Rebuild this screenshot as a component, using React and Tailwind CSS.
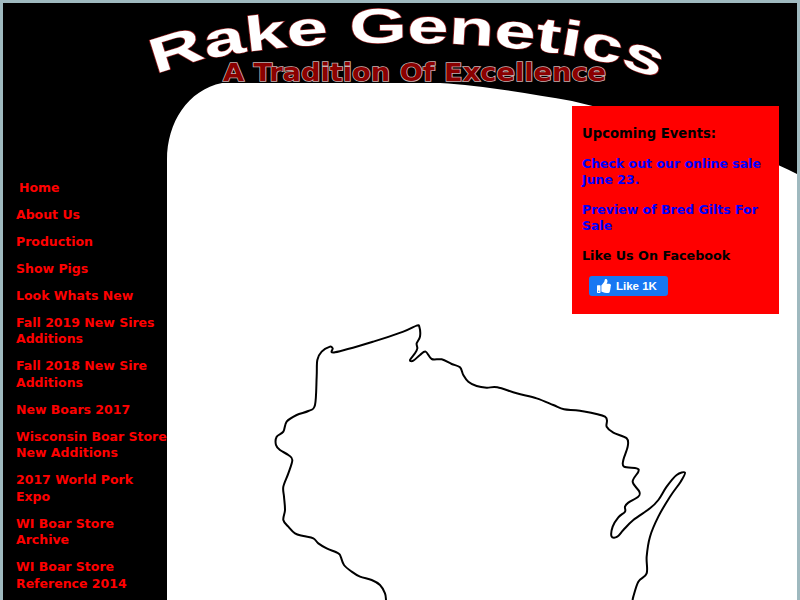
import React from 'react';
import { FaThumbsUp } from 'react-icons/fa';

const navItems = [
  'Home',
  'About Us',
  'Production',
  'Show Pigs',
  'Look Whats New',
  'Fall 2019 New Sires Additions',
  'Fall 2018 New Sire Additions',
  'New Boars 2017',
  'Wisconsin Boar Store New Additions',
  '2017 World Pork Expo',
  'WI Boar Store Archive',
  'WI Boar Store Reference 2014',
];

// State outline, traced at 3x
const outline = [
  [378,870],[375,850],[360,825],[335,810],[300,800],[275,785],[252,765],[242,740],[235,730],[200,715],
  [175,700],[160,685],[130,678],[105,670],[85,650],[70,630],[75,600],[72,560],[70,530],[85,490],
  [97,450],[85,435],[60,420],[48,405],[50,380],[70,365],[80,335],[110,315],[145,303],[165,285],
  [170,200],[172,150],[185,125],[210,110],[218,115],[225,127],[340,95],[430,65],[470,47],[478,50],
  [480,80],[470,100],[472,115],[465,130],[450,150],[460,152],[480,135],[497,125],[515,147],[545,148],
  [575,162],[600,172],[610,195],[625,215],[650,228],[680,233],[712,232],[770,250],[830,265],[880,285],
  [912,298],[960,302],[1035,320],[1040,350],[1060,368],[1100,385],[1103,410],[1090,450],[1092,470],[1130,475],
  [1135,485],[1118,515],[1138,545],[1135,560],[1105,578],[1095,590],[1095,605],[1075,622],[1058,650],[1055,680],
  [1072,680],[1090,660],[1120,630],[1170,595],[1195,570],[1220,530],[1250,495],[1275,488],[1262,515],[1230,560],
  [1195,620],[1170,680],[1160,740],[1160,790],[1135,815],[1120,860],[1118,870],
];

// Catmull-Rom through the traced points so the line comes out smooth
const smoothPath = pts => {
  let d = `M${pts[0][0]} ${pts[0][1]}`;
  for (let i = 0; i < pts.length - 1; i++) {
    const p0 = pts[i - 1] || pts[i];
    const p1 = pts[i];
    const p2 = pts[i + 1];
    const p3 = pts[i + 2] || p2;
    const c1x = p1[0] + (p2[0] - p0[0]) / 6;
    const c1y = p1[1] + (p2[1] - p0[1]) / 6;
    const c2x = p2[0] - (p3[0] - p1[0]) / 6;
    const c2y = p2[1] - (p3[1] - p1[1]) / 6;
    d += ` C${c1x} ${c1y} ${c2x} ${c2y} ${p2[0]} ${p2[1]}`;
  }
  return d;
};

const Banner = () => (
  <svg className="block" width="794" height="173" viewBox="3 3 794 173">
    <rect x="3" y="3" width="794" height="173" fill="#000000" />
    <path
      d="M167 176 L167 160 C167 122 188 90 222 83 L440 83 C480 85 530 94 572 101 C650 120 730 140 797 174 L797 176 Z"
      fill="#ffffff"
    />
    <path id="arc" d="M156 76 C240 31 560 31 658 80" fill="none" />
    <text
      fontFamily="'Liberation Sans', sans-serif"
      fontWeight="700"
      fontSize="49"
      fill="#ffffff"
      stroke="#8b1a1a"
      strokeWidth="1.2"
      paintOrder="stroke"
    >
      <textPath href="#arc" textLength="510" lengthAdjust="spacingAndGlyphs">Rake Genetics</textPath>
    </text>
    <text
      x="223"
      y="81"
      fontFamily="'DejaVu Sans', sans-serif"
      fontWeight="700"
      fontSize="24"
      fill="#8b0000"
      stroke="#c9b0b0"
      strokeWidth="1.5"
      paintOrder="stroke"
      textLength="383"
      lengthAdjust="spacingAndGlyphs"
    >
      A Tradition Of Excellence
    </text>
  </svg>
);

const App = () => {
  return (
    <div className="relative h-[600px] overflow-hidden border-x-[3px] border-t-[3px] border-[#9fb9bf] bg-black font-['DejaVu_Sans',sans-serif] text-[12.5px] font-bold leading-[16.5px]">
      <Banner />

      <div className="flex">
        {/* Left nav */}
        <div className="w-[164px] shrink-0 pl-[13px] pt-[3.5px]">
          <ul className="flex flex-col gap-[10.5px] text-[#ff0000]">
            {navItems.map((item, idx) => (
              <li key={idx} className={idx === 0 ? 'pl-[3px]' : ''}>
                {item}
              </li>
            ))}
          </ul>
        </div>

        {/* Main content */}
        <div className="h-[500px] flex-1 bg-white pl-[93px] pt-[134px]">
          <svg className="block" width="440" height="290" viewBox="0 0 1320 870">
            <path
              d={smoothPath(outline)}
              fill="none"
              stroke="#000000"
              strokeWidth="6"
              strokeLinejoin="round"
              strokeLinecap="round"
            />
          </svg>
        </div>
      </div>

      {/* Events box */}
      <div className="absolute left-[569px] top-[103px] h-[208px] w-[207px] bg-[#ff0000] pl-[10px] pr-[8px] pt-[20px] text-black">
        <p className="text-[13.2px]">Upcoming Events:</p>
        <p className="mt-[13px] text-[#0000ff]">Check out our online sale June 23.</p>
        <p className="mt-[13px] text-[#0000ff]">Preview of Bred Gilts For Sale</p>
        <p className="mt-[13px] text-[12.75px]">Like Us On Facebook</p>
        <div className="ml-[7px] mt-[12px] flex h-[20px] w-[79px] items-center gap-[5px] rounded-[3px] bg-[#1877f2] pl-[8px] font-['Liberation_Sans',sans-serif] text-[11.5px] text-white">
          <FaThumbsUp className="h-[14px] w-[14px]" />
          <span>Like 1K</span>
        </div>
      </div>
    </div>
  );
};

export default App;
